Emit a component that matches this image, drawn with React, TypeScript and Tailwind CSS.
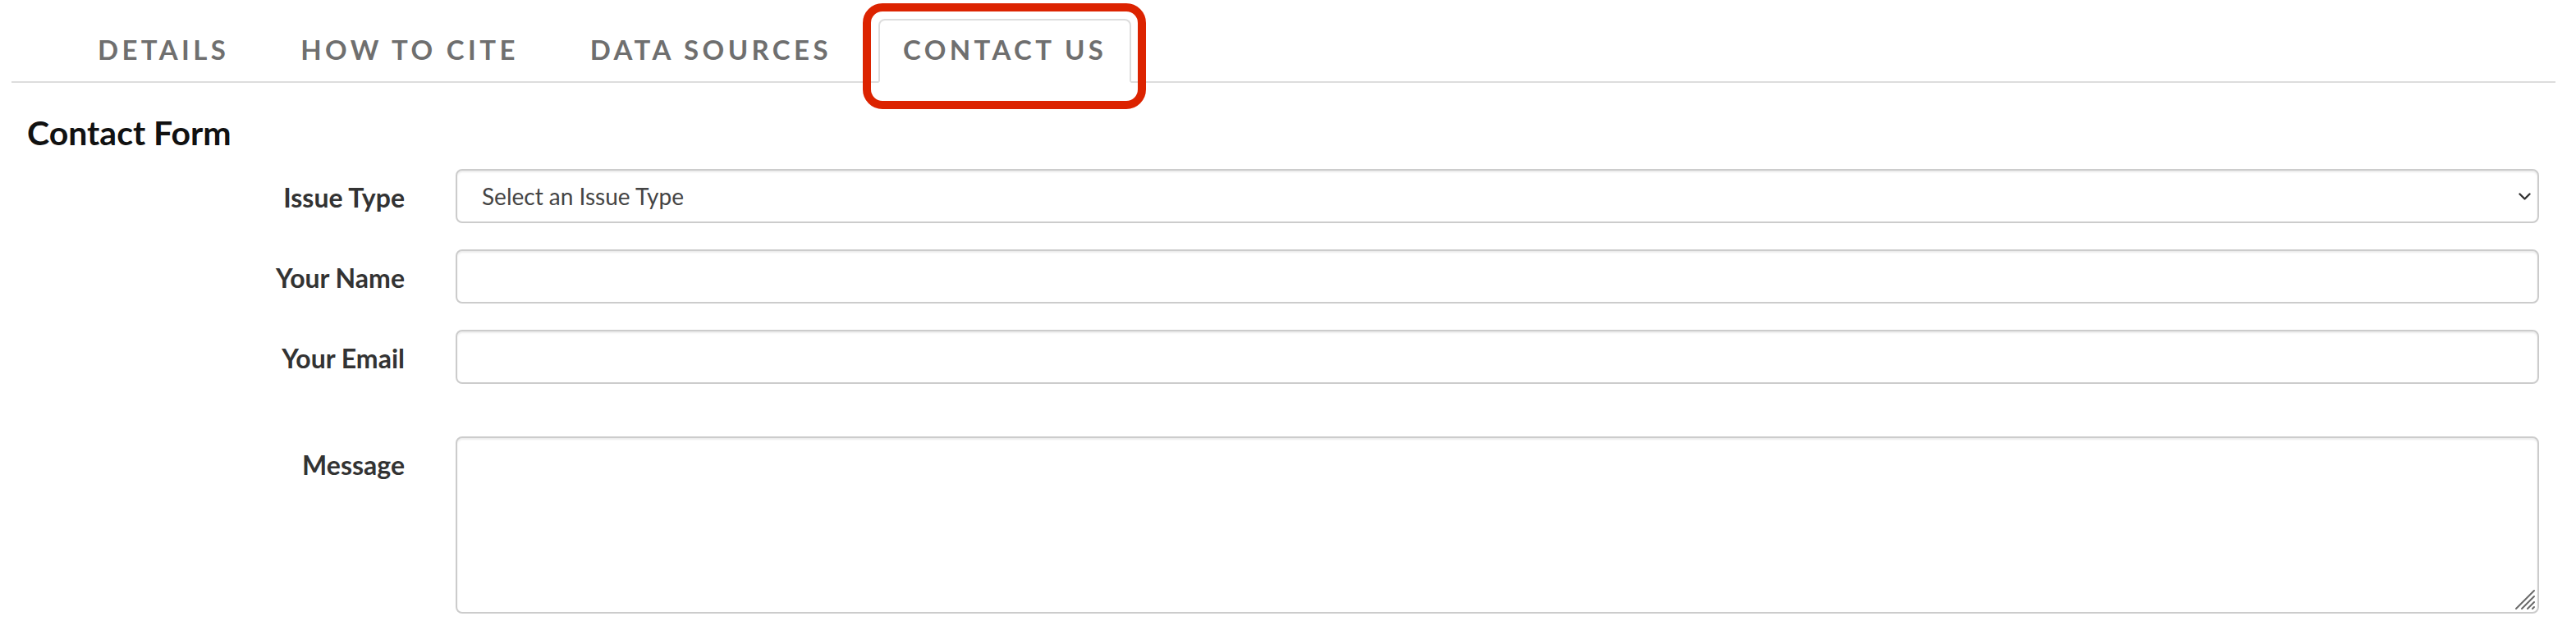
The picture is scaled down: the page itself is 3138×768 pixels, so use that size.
import { ReactNode } from 'react'

const tabs = ['Details', 'How to Cite', 'Data Sources', 'Contact Us']

function Field({ label, children, className = '' }: { label: string; children: ReactNode; className?: string }) {
  return (
    <div className={`grid grid-cols-[493px_1fr] gap-x-[62px] ${className}`}>
      <label className="pt-[12px] text-right text-[32px] font-bold leading-[46px] text-[#333333]">{label}</label>
      {children}
    </div>
  )
}

const inputClass =
  'h-[66px] w-full rounded-[8px] border-2 border-[#cccccc] bg-white px-[30px] text-[28px] text-[#444444] shadow-[inset_0_2px_2px_rgba(0,0,0,0.075)] outline-none'

export default function App() {
  return (
    <div className="min-h-[768px] w-full bg-white font-['Lato','Liberation_Sans',sans-serif]">
      <nav className="ml-[14px] mr-[25px] flex gap-[27px] border-b-2 border-[#dddddd] pl-[75px] pt-[23px]">
        {tabs.map((tab, i) => {
          const active = i === tabs.length - 1
          return (
            <div
              key={tab}
              className={`relative -mb-[2px] rounded-t-[8px] border-2 px-[28px] pt-[12px] pb-[15px] text-[33px] font-bold uppercase leading-[47px] tracking-[4.4px] text-[#6f6f6f] ${
                active ? 'border-[#dddddd] border-b-white bg-white' : 'border-transparent'
              }`}
            >
              {tab}
              {active && (
                <span className="pointer-events-none absolute -top-[21px] -right-[20px] -bottom-[34px] -left-[21px] rounded-[24px] border-[10px] border-[#dc2300]" />
              )}
            </div>
          )
        })}
      </nav>

      <div className="pr-[45px]">
        <h1 className="ml-[33px] mt-[39px] mb-[22px] text-[41px] font-bold leading-[44px] text-[#111111]">Contact Form</h1>

        <div className="flex flex-col gap-[32px]">
          <Field label="Issue Type">
            <div className="relative">
              <select className={`${inputClass} appearance-none`} defaultValue="">
                <option value="">Select an Issue Type</option>
              </select>
              <svg
                className="pointer-events-none absolute right-[10px] top-[29px] h-[9px] w-[15px]"
                viewBox="0 0 15 9"
                fill="none"
                stroke="#333333"
                strokeWidth="2.4"
                strokeLinecap="round"
                strokeLinejoin="round"
              >
                <path d="M1.5 1.5l6 6 6-6" />
              </svg>
            </div>
          </Field>
          <Field label="Your Name">
            <input className={inputClass} type="text" />
          </Field>
          <Field label="Your Email">
            <input className={inputClass} type="email" />
          </Field>
          <Field label="Message" className="mt-[32px]">
            <div className="relative">
              <textarea className={`${inputClass} block h-[216px] resize-none py-[12px]`} />
              <svg
                className="pointer-events-none absolute right-[4px] bottom-[4px] h-[26px] w-[26px]"
                viewBox="0 0 26 26"
                stroke="#6a6a6a"
                strokeWidth="2"
                strokeLinecap="round"
              >
                <path d="M2 24L24 2M9 24L24 9M16 24L24 16M22 24L24 22" />
              </svg>
            </div>
          </Field>
        </div>
      </div>
    </div>
  )
}
